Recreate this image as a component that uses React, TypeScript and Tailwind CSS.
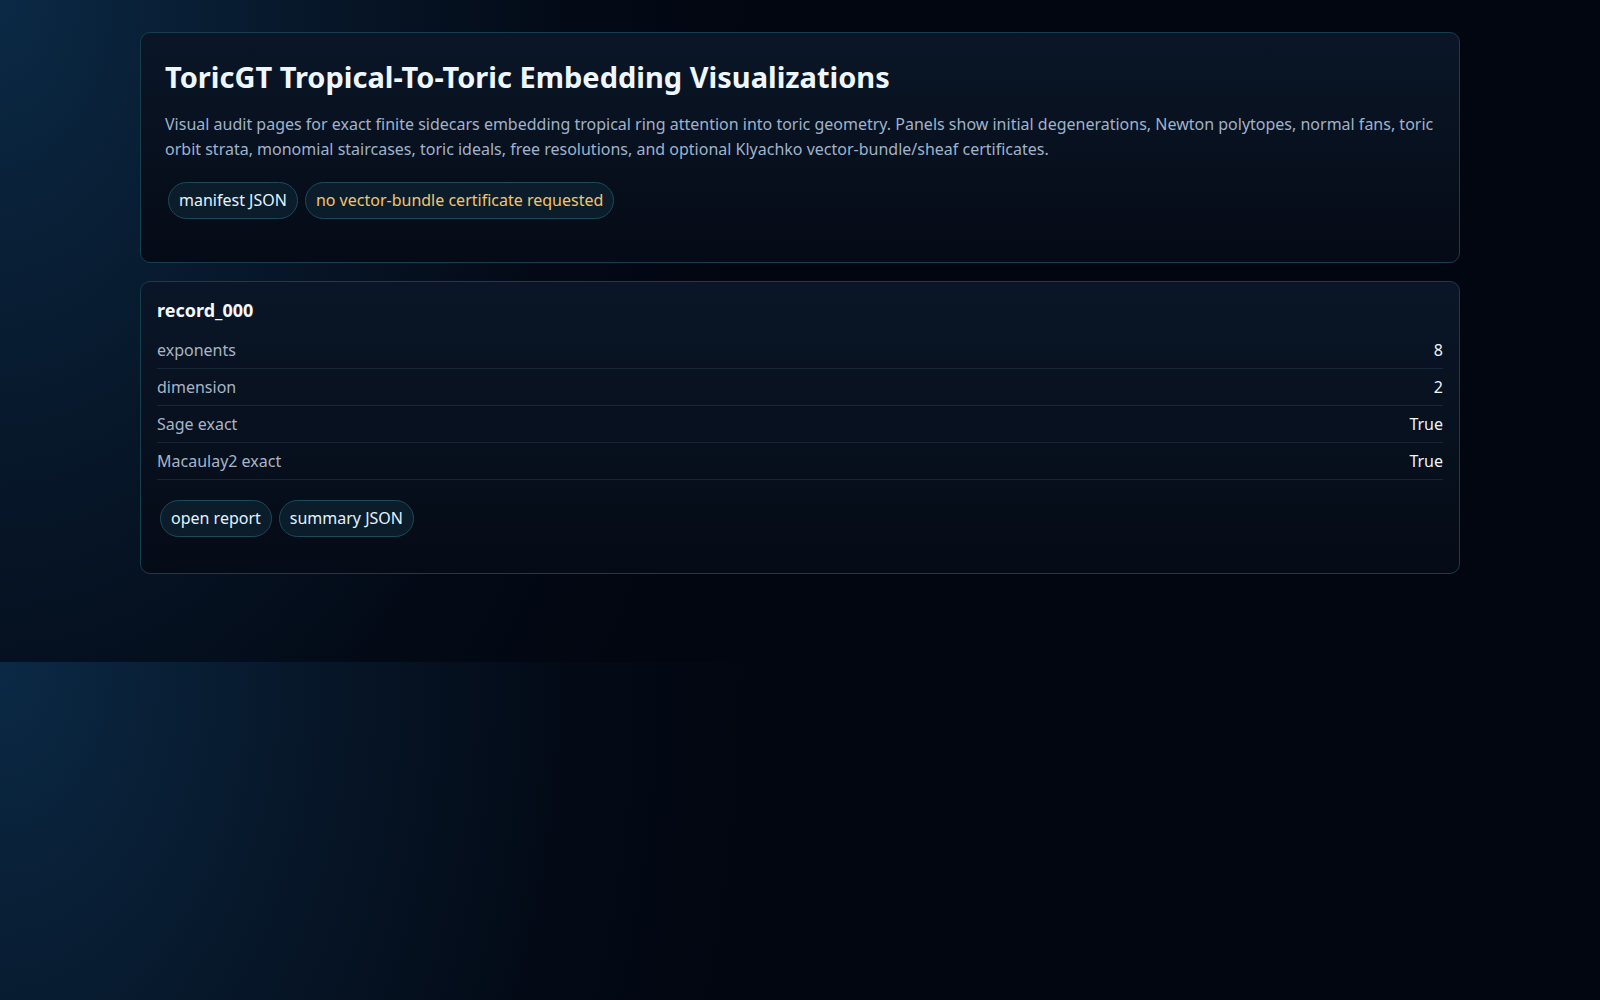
const chipBase =
  "inline-flex items-center rounded-full border border-[#1b4a5b] bg-[#0b1d2b] px-[10px] py-[5px] text-[16px] leading-[25px]";

const rows = [
  { label: "exponents", value: "8" },
  { label: "dimension", value: "2" },
  { label: "Sage exact", value: "True" },
  { label: "Macaulay2 exact", value: "True" },
];

const Chip = ({ children, tone = "light" }: { children: string; tone?: "light" | "warn" }) => (
  <a
    href="#"
    className={`${chipBase} ${tone === "warn" ? "text-[#f3c46b]" : "text-[#e2f3ff]"}`}
  >
    {children}
  </a>
);

export default function App() {
  return (
    <div
      className="min-h-screen bg-[#020611] bg-[radial-gradient(ellipse_760px_1150px_at_0_0,#0b2945_0%,#07182b_38%,#030a16_75%,#020611_100%)] bg-[length:100%_662px] bg-repeat-y text-[#e6eef6]"
      style={{ fontFamily: '"Noto Sans", "Open Sans", sans-serif' }}
    >
      <main className="mx-auto w-[1320px] pt-[32px] pb-[89px]">
        <section className="rounded-[10px] border border-[#163e4f] bg-[linear-gradient(180deg,#0a1627_0%,#050b16_100%)] px-[24px] pt-[27px] pb-[24px]">
          <h1 className="m-0 text-[29px] font-bold leading-[1.2] text-[#eef7ff]">
            ToricGT Tropical-To-Toric Embedding Visualizations
          </h1>
          <p className="mt-[17px] text-[16px] leading-[25px] text-[#9fb3cb]">
            Visual audit pages for exact finite sidecars embedding tropical ring attention into toric geometry. Panels
            show initial degenerations, Newton polytopes, normal fans, toric orbit strata, monomial staircases, toric
            ideals, free resolutions, and optional Klyachko vector-bundle/sheaf certificates.
          </p>
          <div className="mt-[17px] mb-[16px] flex flex-wrap gap-[7px] p-[3px]">
            <Chip>manifest JSON</Chip>
            <Chip tone="warn">no vector-bundle certificate requested</Chip>
          </div>
        </section>

        <section className="mt-[18px] rounded-[10px] border border-[#163e4f] bg-[linear-gradient(180deg,#0a1627_0%,#050b16_100%)] px-[16px] pt-[18px] pb-[16px]">
          <h2 className="m-0 text-[18px] font-bold leading-[1.2] text-[#f4f9ff]">record_000</h2>
          <div className="mt-[11px]">
            {rows.map((r) => (
              <div
                key={r.label}
                className="flex items-center justify-between border-b border-[#172636] py-2 text-[16px] leading-[20px]"
              >
                <span className="text-[#a7b5c6]">{r.label}</span>
                <span className="text-[#eef4fa]">{r.value}</span>
              </div>
            ))}
          </div>
          <div className="mt-[17px] mb-[17px] flex flex-wrap gap-[7px] p-[3px]">
            <Chip>open report</Chip>
            <Chip>summary JSON</Chip>
          </div>
        </section>
      </main>
    </div>
  );
}
